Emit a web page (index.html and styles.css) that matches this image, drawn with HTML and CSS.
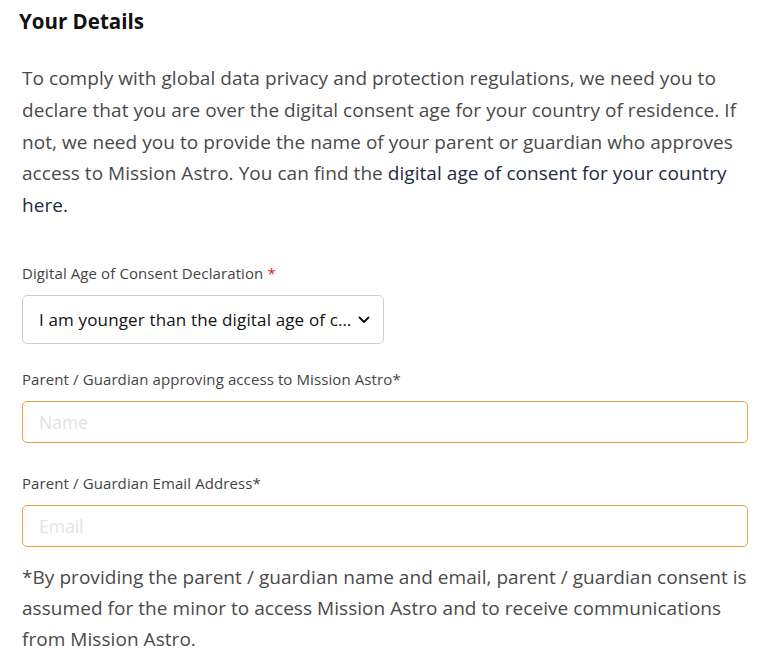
FILE: index.html
```html
<!DOCTYPE html>
<html lang="en">
<head>
<meta charset="utf-8">
<title>Your Details</title>
<link rel="stylesheet" href="styles.css">
</head>
<body>
<main class="page">
  <h2 class="title">Your Details</h2>
  <p class="intro">To comply with global data privacy and protection regulations, we need you to declare that you are over the digital consent age for your country of residence. If not, we need you to provide the name of your parent or guardian who approves access to Mission Astro. You can find the <a class="link" href="#">digital age of consent for your country here.</a></p>

  <div class="field field-first">
    <label class="label">Digital Age of Consent Declaration <span class="req">*</span></label>
    <div class="select">
      <span class="select-text">I am younger than the digital age of consent for my country</span>
      <svg class="chevron" width="12" height="8" viewBox="0 0 12 8"><path d="M1.5 1.5 L6 6 L10.5 1.5" fill="none" stroke="#111" stroke-width="1.8" stroke-linecap="round" stroke-linejoin="round"/></svg>
    </div>
  </div>

  <div class="field field-second">
    <label class="label">Parent / Guardian approving access to Mission Astro*</label>
    <input class="input" type="text" placeholder="Name">
  </div>

  <div class="field field-third">
    <label class="label">Parent / Guardian Email Address*</label>
    <input class="input" type="email" placeholder="Email">
  </div>

  <p class="note">*By providing the parent / guardian name and email, parent / guardian consent is assumed for the minor to access Mission Astro and to receive communications from Mission Astro.</p>
</main>
</body>
</html>
```
FILE: styles.css
```css
html, body {
  margin: 0;
  padding: 0;
  background: #fff;
}
body {
  font-family: "Open Sans", "Liberation Sans", sans-serif;
  color: #4a4a4a;
}
.page {
  padding: 6px 14px 0 22px;
}
.title {
  margin: 0 0 0 -3px;
  font-size: 20.5px;
  line-height: 30px;
  font-weight: 700;
  color: #111;
}
.intro {
  margin: 27px 0 0 0;
  font-size: 19px;
  letter-spacing: 0.05px;
  line-height: 31.75px;
  color: #4a4a4a;
}
.link {
  color: #1e2b48;
  text-decoration: none;
}
.field {
  display: flex;
  flex-direction: column;
  gap: 11px;
}
.field-first {
  margin-top: 40px;
}
.field-second {
  margin-top: 24px;
}
.field-third {
  margin-top: 29px;
}
.label {
  font-size: 15px;
  letter-spacing: 0.1px;
  line-height: 22px;
  color: #444;
}
.req {
  color: #e0201b;
}
.select {
  position: relative;
  width: 362px;
  height: 49px;
  box-sizing: border-box;
  border: 1px solid #cfcfcf;
  border-radius: 5px;
  display: flex;
  align-items: center;
  padding: 0 0 0 16px;
}
.select-text {
  width: 318px;
  white-space: nowrap;
  overflow: hidden;
  text-overflow: ellipsis;
  font-size: 17px;
  letter-spacing: 0.15px;
  color: #111;
}
.chevron {
  position: absolute;
  right: 13px;
  top: 20px;
}
.input {
  width: 726px;
  height: 42px;
  box-sizing: border-box;
  border: 1px solid #e8a33d;
  border-radius: 5px;
  padding: 0 16px;
  font-family: inherit;
  font-size: 17.5px;
  color: #111;
  outline: none;
}
.input::placeholder {
  color: #e4e1e4;
}
.note {
  margin: 15px 0 0 0;
  font-size: 19px;
  letter-spacing: 0.05px;
  line-height: 31px;
  color: #4a4a4a;
}
```
